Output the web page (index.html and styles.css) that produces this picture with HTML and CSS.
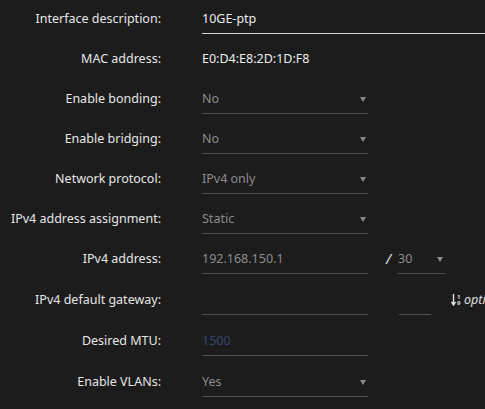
FILE: index.html
```html
<!DOCTYPE html>
<html lang="en">
<head>
    <meta charset="UTF-8">
    <title>Interface settings</title>
    <link rel="stylesheet" href="styles.css">
</head>
<body>
    <div class="iface-form">
        <div class="row">
            <label class="lbl">Interface description:</label>
            <div class="field field-wide text-input">10GE-ptp</div>
        </div>

        <div class="row">
            <label class="lbl">MAC address:</label>
            <div class="field static">E0:D4:E8:2D:1D:F8</div>
        </div>

        <div class="row">
            <label class="lbl">Enable bonding:</label>
            <div class="field select">No<span class="caret"></span></div>
        </div>

        <div class="row">
            <label class="lbl">Enable bridging:</label>
            <div class="field select">No<span class="caret"></span></div>
        </div>

        <div class="row">
            <label class="lbl">Network protocol:</label>
            <div class="field select">IPv4 only<span class="caret"></span></div>
        </div>

        <div class="row">
            <label class="lbl">IPv4 address assignment:</label>
            <div class="field select">Static<span class="caret"></span></div>
        </div>

        <div class="row">
            <label class="lbl">IPv4 address:</label>
            <div class="field">192.168.150.1</div>
            <div class="extra">
                <span class="slash">/</span>
                <div class="field select prefix">30<span class="caret"></span></div>
            </div>
        </div>

        <div class="row">
            <label class="lbl">IPv4 default gateway:</label>
            <div class="field"></div>
            <div class="extra">
                <div class="field metric"></div>
                <span class="sort-icon">
                    <svg width="5" height="12" viewBox="0 0 5 12">
                        <path d="M2.5 0v10M0.5 8l2 3 2-3" stroke="#ddd" stroke-width="1.4" fill="none"/>
                    </svg>
                    <span class="digits"><span>1</span><span>9</span></span>
                </span>
                <span class="opt">optional</span>
            </div>
        </div>

        <div class="row">
            <label class="lbl">Desired MTU:</label>
            <div class="field mtu">1500</div>
        </div>

        <div class="row">
            <label class="lbl">Enable VLANs:</label>
            <div class="field select">Yes<span class="caret"></span></div>
        </div>
    </div>
</body>
</html>
```

FILE: styles.css
```css
body {
    font-family: 'Noto Sans', 'Liberation Sans', Arial, sans-serif;
    font-size: 12.5px;
    background-color: #1c1c1c;
    color: #e4e4e4;
    margin: 0;
    overflow: hidden;
}

.iface-form {
    padding-top: 5px;
}

.row {
    display: grid;
    grid-template-columns: 161px 166px 1fr;
    column-gap: 41px;
    height: 40px;
    align-items: start;
}

.row:nth-child(n+7) {
    height: 41px;
}

.lbl {
    text-align: right;
    line-height: 28px;
    white-space: nowrap;
    color: #e6e6e6;
}

.field {
    position: relative;
    height: 28px;
    line-height: 28px;
    border-bottom: 1px solid #4e4e4e;
    color: #8c8c8c;
    white-space: nowrap;
}

.field-wide {
    grid-column: 2 / 4;
    margin-right: -10px;
}

.text-input {
    color: #ececec;
    border-bottom-color: #d8d8d8;
}

.static {
    border-bottom: none;
    color: #ececec;
}

.mtu {
    color: #33476a;
}

.caret {
    position: absolute;
    right: 2px;
    top: 12px;
    width: 0;
    height: 0;
    border-left: 3px solid transparent;
    border-right: 3px solid transparent;
    border-top: 5px solid #8a8a8a;
}

.extra {
    display: flex;
    align-items: flex-start;
    margin-left: -41px;
    white-space: nowrap;
}

.slash {
    width: 30px;
    padding-left: 18px;
    box-sizing: border-box;
    line-height: 28px;
    font-size: 14px;
    color: #e6e6e6;
    font-style: italic;
}

.prefix {
    width: 47px;
}

.metric {
    margin-left: 31px;
    width: 32px;
}

.sort-icon {
    display: flex;
    align-items: center;
    height: 28px;
    margin-left: 20px;
}

.digits {
    display: flex;
    flex-direction: column;
    width: 4px;
    font-size: 6px;
    line-height: 6px;
    font-weight: bold;
    color: #ddd;
    margin-left: 1px;
}

.opt {
    margin-left: 3px;
    line-height: 28px;
    font-style: italic;
    color: #e0e0e0;
}
```
